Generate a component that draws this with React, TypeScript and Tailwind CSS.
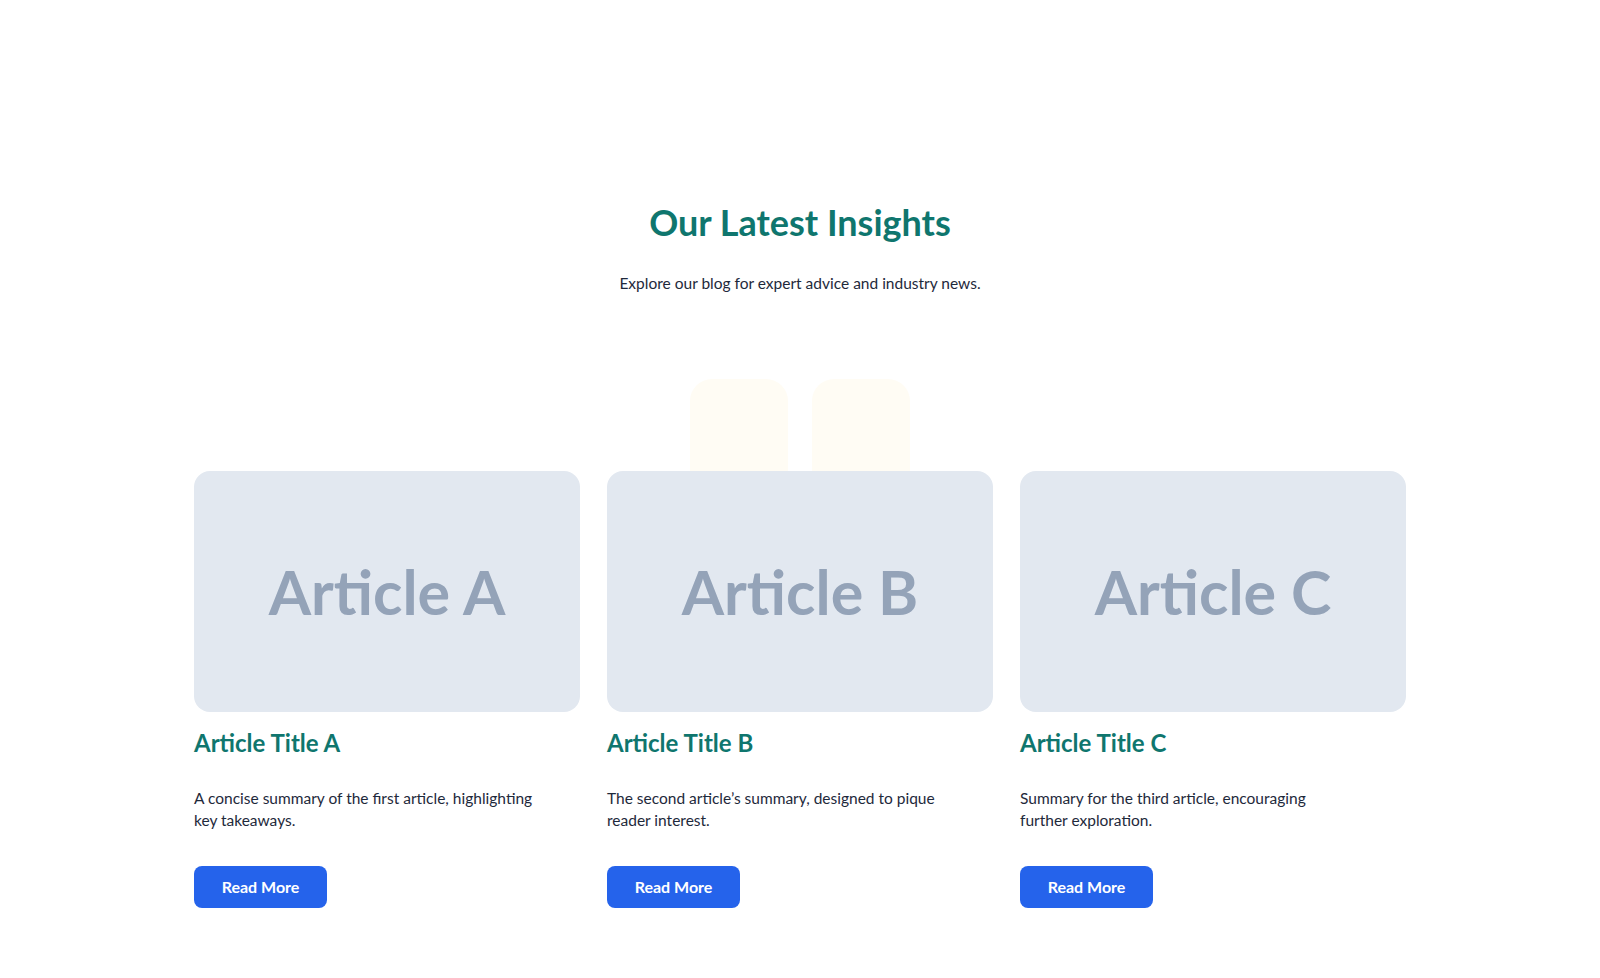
import React from 'react';

interface Article {
    label: string;
    title: string;
    summary: string[];
}

const articles: Article[] = [
    {
        label: 'Article A',
        title: 'Article Title A',
        summary: ['A concise summary of the first article, highlighting', 'key takeaways.'],
    },
    {
        label: 'Article B',
        title: 'Article Title B',
        summary: ['The second article\u2019s summary, designed to pique', 'reader interest.'],
    },
    {
        label: 'Article C',
        title: 'Article Title C',
        summary: ['Summary for the third article, encouraging', 'further exploration.'],
    },
];

const ArticleCard: React.FC<{ article: Article }> = ({ article }) => {
    return (
        <div className="flex flex-col">
            <div className="flex justify-center items-center bg-[#e2e8f0] rounded-[16px] h-[241px]">
                <span className="font-bold text-[#94a3b8] text-[61px] leading-none">
                    {article.label}
                </span>
            </div>
            <h3 className="mt-[15px] font-bold text-[#0f766e] text-[24px] leading-[32px]">
                {article.title}
            </h3>
            <p className="mt-[28px] text-[#1e293b] text-[15.5px] leading-[22px]">
                {article.summary.map((line) => (
                    <span key={line} className="block">
                        {line}
                    </span>
                ))}
            </p>
            <div className="mt-[35px]">
                <button className="flex justify-center items-center bg-[#2563eb] rounded-[8px] w-[133px] h-[42px] font-bold text-[16px] text-white">
                    Read More
                </button>
            </div>
        </div>
    );
};

const App: React.FC = () => {
    return (
        <div className="bg-white w-full min-h-[978px] font-['Lato',sans-serif]">
            <section className="relative pt-[198px] pb-[71px]">
                <div className="text-center">
                    <h2 className="font-bold text-[#0f766e] text-[36px] leading-[48px]">
                        Our Latest Insights
                    </h2>
                    <p className="mt-[25px] text-[#1e293b] text-[15.5px] leading-[24px]">
                        Explore our blog for expert advice and industry news.
                    </p>
                </div>

                <div className="relative mx-auto mt-[176px] w-[1212px]">
                    {/* faint decorative tiles peeking above the cards */}
                    <div className="top-[-92px] left-[496px] absolute bg-[#fffcf4] rounded-[22px] w-[98px] h-[120px]" />
                    <div className="top-[-92px] left-[618px] absolute bg-[#fffcf4] rounded-[22px] w-[98px] h-[120px]" />

                    <div className="relative grid grid-cols-3 gap-[27px]">
                        {articles.map((a) => (
                            <ArticleCard key={a.label} article={a} />
                        ))}
                    </div>
                </div>
            </section>
        </div>
    );
};

export default App;
